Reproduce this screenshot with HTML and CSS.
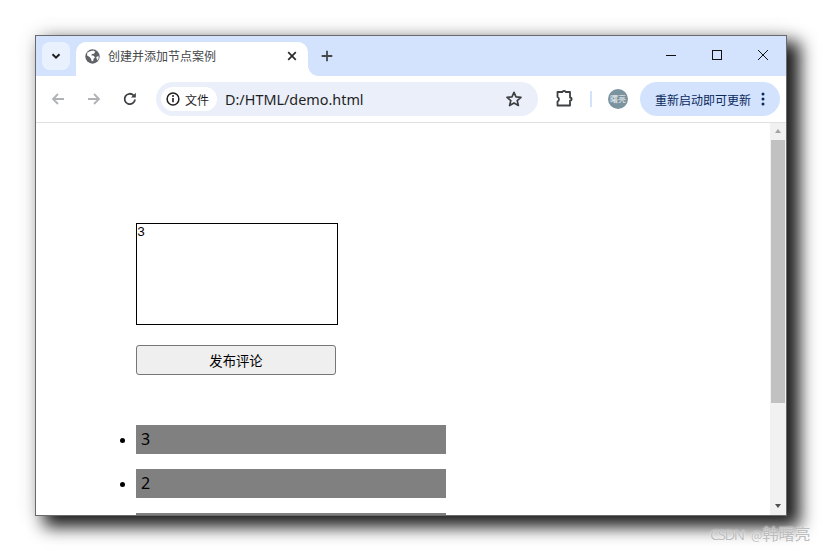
FILE: index.html
```html
<!DOCTYPE html>
<html lang="zh">
<head>
<meta charset="utf-8">
<title>创建并添加节点案例</title>
<link rel="stylesheet" href="styles.css">
</head>
<body>
<div class="window">
  <div class="titlebar">
    <button class="tab-search"><svg width="12" height="12" viewBox="0 0 12 12"><path d="M2.500 4.200 6 7.700l3.500-3.500" fill="none" stroke="#1f1f1f" stroke-width="2"/></svg></button>
    <div class="tab">
      <svg class="globe" width="15" height="15" viewBox="0 0 15 15"><circle cx="7.500" cy="7.500" r="7.200" fill="#5f6368"/><path d="M2.200 3.800 5 2.300l3.300-.7 2 1.200-1.300 2-2 .2-.8 1.300 2.500.4 1.300 1.500-1.500 1.800-.3 2-1.500.3-.7-2.600-1.400-1.600-2.500-1.500zM11.200 8l2.300-1 .2 2.200-1.500 2.300z" fill="#fff"/></svg>
      <span class="tab-title">创建并添加节点案例</span>
      <svg class="tab-close" width="10" height="10" viewBox="0 0 10 10"><path d="M1.200 1.200l7.600 7.600M8.800 1.200 1.200 8.800" stroke="#2b2b2b" stroke-width="1.700"/></svg>
    </div>
    <svg class="new-tab" width="12" height="12" viewBox="0 0 12 12"><path d="M6 .7v10.600M.7 6h10.600" stroke="#45474a" stroke-width="1.800"/></svg>
    <div class="win-controls">
      <svg width="12" height="12" viewBox="0 0 12 12"><path d="M1 6.500h10" stroke="#111" stroke-width="1"/></svg>
      <svg width="12" height="12" viewBox="0 0 12 12"><rect x="1.500" y="1.500" width="9" height="9" fill="none" stroke="#111"/></svg>
      <svg width="12" height="12" viewBox="0 0 12 12"><path d="M1 1l10 10M11 1 1 11" stroke="#111" stroke-width="1"/></svg>
    </div>
  </div>
  <div class="toolbar">
    <svg class="nav" width="16" height="16" viewBox="0 0 16 16"><path d="M14 8H3M8 3 3 8l5 5" fill="none" stroke="#b0b2b5" stroke-width="1.800"/></svg>
    <svg class="nav" width="16" height="16" viewBox="0 0 16 16"><path d="M2 8h11M8 3l5 5-5 5" fill="none" stroke="#b0b2b5" stroke-width="1.800"/></svg>
    <svg class="nav" width="16" height="16" viewBox="0 0 16 16"><path d="M13 8.500A5.200 5.200 0 1 1 11.500 4.300" fill="none" stroke="#3c4043" stroke-width="1.800"/><path d="M13.800 1.800v4.800H9z" fill="#3c4043"/></svg>
    <div class="omnibox">
      <div class="chip">
        <svg width="14" height="14" viewBox="0 0 14 14"><circle cx="7" cy="7" r="5.900" fill="none" stroke="#1f1f1f" stroke-width="1.500"/><path d="M7 6v4.200" stroke="#1f1f1f" stroke-width="1.600"/><circle cx="7" cy="4.100" r="1" fill="#1f1f1f"/></svg>
        <span>文件</span>
      </div>
      <span class="url">D:/HTML/demo.html</span>
      <svg class="star" width="18" height="18" viewBox="0 0 18 18"><path d="M9 2.300l2 4.600 5 .4-3.800 3.300 1.200 4.900L9 12.900l-4.400 2.600 1.200-4.900L2 7.300l5-.4z" fill="none" stroke="#3c4043" stroke-width="1.700" stroke-linejoin="round"/></svg>
    </div>
    <svg class="ext" width="18" height="18" viewBox="0 0 18 18"><path d="M1.500 2h5a1.700 1.700 0 0 1 3.200 0h4.300v5.500a1.600 1.600 0 0 1 0 3.200V15.500H1.500v-4c2-.8 2-3.700 0-4.500z" fill="none" stroke="#3c4043" stroke-width="1.800" stroke-linejoin="round"/></svg>
    <div class="sep"></div>
    <div class="avatar">曙亮</div>
    <div class="update">
      <span>重新启动即可更新</span>
      <svg width="4" height="14" viewBox="0 0 4 14"><circle cx="2" cy="2" r="1.500"/><circle cx="2" cy="7" r="1.500"/><circle cx="2" cy="12" r="1.500"/></svg>
    </div>
  </div>
  <div class="viewport">
    <main class="page">
      <textarea class="comment" readonly>3</textarea>
      <button class="publish">发布评论</button>
      <ul class="list">
        <li>3</li>
        <li>2</li>
        <li></li>
      </ul>
    </main>
    <div class="scrollbar">
      <div class="arrow up"></div>
      <div class="thumb"></div>
      <div class="arrow down"></div>
    </div>
  </div>
</div>
<div class="watermark"><span class="wm-latin">CSDN</span> <span class="wm-at">@</span>韩曙亮</div>
</body>
</html>
```
FILE: styles.css
```css
html, body {
  margin: 0;
  height: 100%;
  background: #fff;
  overflow: hidden;
}
body {
  font-family: "Noto Sans CJK SC", "Noto Sans", sans-serif;
  position: relative;
}
.window {
  position: absolute;
  left: 35px;
  top: 35px;
  width: 752px;
  height: 481px;
  box-sizing: border-box;
  border: 1px solid #6a6a6e;
  background: #fff;
  display: flex;
  flex-direction: column;
  box-shadow: 11px 9px 16px 2px rgba(0, 0, 0, .88), 0 0 20px rgba(0, 0, 0, .12);
}
.titlebar {
  height: 40px;
  flex: none;
  background: #d3e3fd;
  display: flex;
  align-items: flex-start;
  position: relative;
}
.tab-search {
  width: 28px;
  height: 28px;
  margin: 6px 0 0 6px;
  padding: 0;
  border: 0;
  border-radius: 8px;
  background: #e9f1fe;
  display: flex;
  align-items: center;
  justify-content: center;
}
.tab {
  position: relative;
  width: 232px;
  height: 34px;
  margin: 6px 0 0 6px;
  box-sizing: border-box;
  padding: 0 11px 6px 9px;
  background: #fff;
  border-radius: 10px 10px 0 0;
  display: flex;
  align-items: center;
  color: #45474a;
  font-size: 12px;
}
.tab::after {
  content: "";
  position: absolute;
  right: -10px;
  bottom: 0;
  width: 10px;
  height: 10px;
  background: radial-gradient(circle at 100% 0, transparent 9.500px, #fff 10px);
}
.globe {
  flex: none;
}
.tab-title {
  margin-left: 8px;
  flex: 1;
  line-height: 18px;
}
.tab-close {
  flex: none;
}
.new-tab {
  margin: 14px 0 0 13px;
}
.win-controls {
  margin-left: auto;
  margin-right: 17px;
  margin-top: 13px;
  display: flex;
  gap: 34px;
}
.toolbar {
  height: 46px;
  flex: none;
  box-sizing: border-box;
  background: #fff;
  border-radius: 10px 10px 0 0;
  display: flex;
  align-items: center;
  padding: 0 6px 0 14px;
}
.nav {
  flex: none;
  margin-right: 20px;
}
.nav:nth-child(3) {
  margin-right: 18px;
}
.omnibox {
  width: 382px;
  height: 34px;
  flex: none;
  box-sizing: border-box;
  padding: 0 15px 0 5px;
  background: #ebeff9;
  border-radius: 17px;
  display: flex;
  align-items: center;
}
.chip {
  width: 56px;
  height: 24px;
  box-sizing: border-box;
  padding-left: 5px;
  background: #fff;
  border-radius: 12px;
  display: flex;
  align-items: center;
  gap: 5px;
  font-size: 12px;
  color: #1f1f1f;
}
.url {
  margin-left: 8px;
  font-family: "Noto Sans", sans-serif;
  font-size: 14.4px;
  color: #1f1f1f;
}
.star {
  margin-left: auto;
}
.ext {
  flex: none;
  margin-left: 18px;
}
.sep {
  width: 2px;
  height: 16px;
  flex: none;
  margin-left: 16px;
  background: #d3e3fd;
}
.avatar {
  width: 20px;
  height: 20px;
  flex: none;
  margin-left: 16px;
  border-radius: 50%;
  background: #7b939e;
  color: #e8eef0;
  font-size: 8px;
  line-height: 20px;
  text-align: center;
}
.update {
  width: 140px;
  height: 34px;
  flex: none;
  margin-left: 12px;
  box-sizing: border-box;
  padding: 0 15px;
  background: #d3e3fd;
  border-radius: 17px;
  display: flex;
  align-items: center;
  justify-content: space-between;
  color: #0b2a5c;
  font-size: 12px;
}
.update svg {
  fill: #0b2a5c;
}
.viewport {
  flex: 1;
  min-height: 0;
  border-top: 1px solid #e0e0e0;
  display: flex;
  overflow: hidden;
}
.page {
  flex: 1;
  min-width: 0;
  padding: 100px 0 0 100px;
}
.comment {
  display: block;
  width: 202px;
  height: 102px;
  box-sizing: border-box;
  margin: 0;
  padding: 0;
  border: 1px solid #000;
  border-radius: 0;
  outline: none;
  resize: none;
  font-family: "Liberation Mono", monospace;
  font-size: 13.333px;
  line-height: 17px;
  color: #000;
}
.publish {
  display: block;
  width: 200px;
  height: 30px;
  margin: 20px 0 0;
  padding: 0;
  border: 1px solid #767676;
  border-radius: 3px;
  background: #efefef;
  color: #000;
  font-family: "Noto Sans CJK SC", sans-serif;
  font-size: 13.333px;
}
.list {
  margin: 50px 0 0;
  padding: 0;
  width: 310px;
  font-family: "Noto Sans", sans-serif;
  font-size: 16px;
  color: #000;
}
.list li {
  height: 29px;
  margin-bottom: 15px;
  padding-left: 5px;
  line-height: 29px;
  background: #808080;
}
.list li::marker {
  font-family: "Liberation Sans", sans-serif;
}
.scrollbar {
  width: 16px;
  flex: none;
  background: #f1f1f1;
  display: flex;
  flex-direction: column;
  align-items: center;
}
.arrow {
  width: 16px;
  height: 17px;
  flex: none;
  position: relative;
}
.arrow::after {
  content: "";
  position: absolute;
  left: 4.500px;
  border-left: 3.500px solid transparent;
  border-right: 3.500px solid transparent;
}
.arrow.up::after {
  top: 6px;
  border-bottom: 4px solid #a3a3a3;
}
.arrow.down {
  margin-top: auto;
}
.arrow.down::after {
  top: 6px;
  border-top: 4px solid #505050;
}
.thumb {
  width: 14px;
  height: 263px;
  flex: none;
  background: #c1c1c1;
}
.watermark {
  position: absolute;
  left: 710px;
  top: 524px;
  font-family: "Noto Sans CJK SC", sans-serif;
  font-size: 16px;
  line-height: 18px;
  color: #bdbdbd;
  white-space: nowrap;
  word-spacing: 4px;
  text-shadow: 0 0 2px #fff;
}
.wm-latin {
  font-family: "Open Sans", sans-serif;
  font-size: 15px;
  letter-spacing: -1.6px;
}
.wm-at {
  font-size: 12px;
}
```
